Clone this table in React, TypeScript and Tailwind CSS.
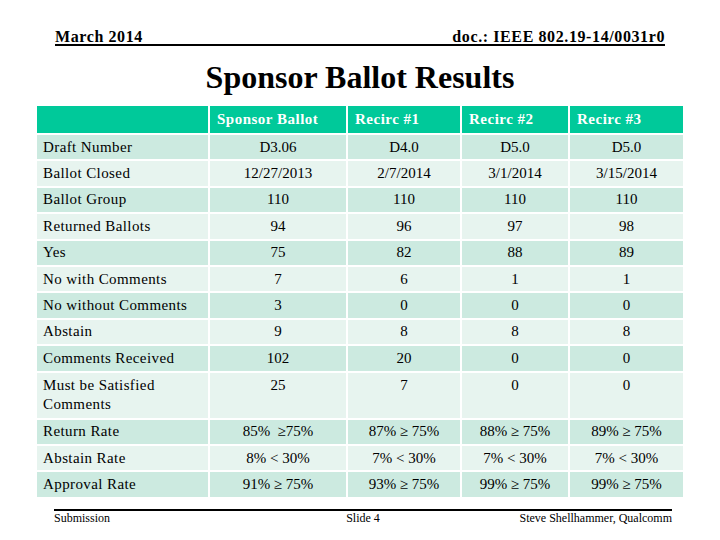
import React from 'react';

const headers = ['Sponsor Ballot', 'Recirc #1', 'Recirc #2', 'Recirc #3'];

const rows: { label: string; values: string[]; tall?: boolean }[] = [
  { label: 'Draft Number', values: ['D3.06', 'D4.0', 'D5.0', 'D5.0'] },
  { label: 'Ballot Closed', values: ['12/27/2013', '2/7/2014', '3/1/2014', '3/15/2014'] },
  { label: 'Ballot Group', values: ['110', '110', '110', '110'] },
  { label: 'Returned Ballots', values: ['94', '96', '97', '98'] },
  { label: 'Yes', values: ['75', '82', '88', '89'] },
  { label: 'No with Comments', values: ['7', '6', '1', '1'] },
  { label: 'No without Comments', values: ['3', '0', '0', '0'] },
  { label: 'Abstain', values: ['9', '8', '8', '8'] },
  { label: 'Comments Received', values: ['102', '20', '0', '0'] },
  { label: 'Must be Satisfied Comments', values: ['25', '7', '0', '0'], tall: true },
  { label: 'Return Rate', values: ['85%  ≥75%', '87% ≥ 75%', '88% ≥ 75%', '89% ≥ 75%'] },
  { label: 'Abstain Rate', values: ['8% < 30%', '7% < 30%', '7% < 30%', '7% < 30%'] },
  { label: 'Approval Rate', values: ['91% ≥ 75%', '93% ≥ 75%', '99% ≥ 75%', '99% ≥ 75%'] },
];

const App = () => {
  return (
    <div className="w-[720px] h-[540px] bg-white text-black font-['Liberation_Serif',serif] overflow-hidden">
      {/* slide header */}
      <div className="mx-[55px] h-[46px] flex justify-between items-end border-b-2 border-black text-[16px] leading-[15px] font-bold tracking-[0.6px]">
        <span>March 2014</span>
        <span>doc.: IEEE 802.19-14/0031r0</span>
      </div>

      <h1 className="mt-[13px] text-center text-[32px] leading-[36px] font-bold">Sponsor Ballot Results</h1>

      {/* results table */}
      <div className="mt-[11px] ml-[37px] w-[646px] grid grid-cols-[171px_136px_112px_106px_113px] gap-[2px] text-[15px]">
        <div className="h-[27px] bg-[#00c99a]" />
        {headers.map((h) => (
          <div key={h} className="h-[27px] bg-[#00c99a] text-white font-bold tracking-[0.5px] flex items-center pl-[7px]">
            {h}
          </div>
        ))}

        {rows.map((row, i) => {
          const bg = i % 2 === 0 ? 'bg-[#cceae0]' : 'bg-[#e7f4ef]';
          return (
            <React.Fragment key={row.label}>
              <div
                className={`${bg} pl-[6px] leading-[19px] tracking-[0.4px] ${
                  row.tall ? 'h-[45px] pt-[3px] pr-[30px]' : 'h-[24.4px] flex items-center'
                }`}
              >
                {row.label}
              </div>
              {row.values.map((v, j) => (
                <div
                  key={j}
                  className={`${bg} text-center whitespace-pre leading-[19px] ${
                    row.tall ? 'h-[45px] pt-[3px]' : 'h-[24.4px] flex items-center justify-center'
                  }`}
                >
                  {v}
                </div>
              ))}
            </React.Fragment>
          );
        })}
      </div>

      {/* footer */}
      <div className="mt-[12px] ml-[54px] w-[618px] border-t-2 border-black flex text-[12px] leading-[14px]">
        <span className="flex-1">Submission</span>
        <span className="flex-1 text-center">Slide 4</span>
        <span className="flex-1 text-right">Steve Shellhammer, Qualcomm</span>
      </div>
    </div>
  );
};

export default App;
